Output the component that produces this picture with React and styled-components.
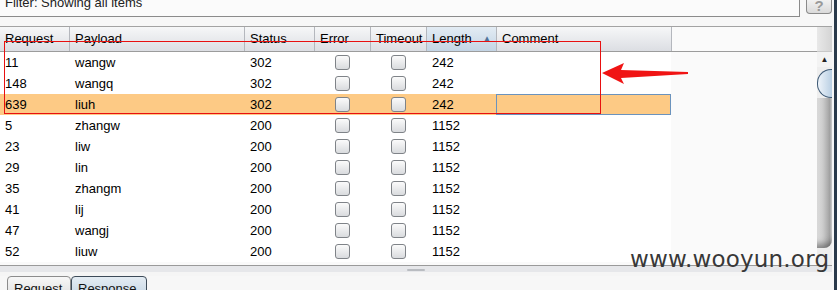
import styled, { createGlobalStyle } from "styled-components";

const Global = createGlobalStyle`
  html, body { margin: 0; padding: 0; background: #f7f7f7; }
  body { font-family: "Liberation Sans", Arial, sans-serif; }
`;

const Page = styled.div`
  position: relative;
  width: 837px;
  height: 290px;
  box-sizing: border-box;
  padding-right: 2px;
  border-right: 3px solid #2a3a4b;
  background: #f7f7f7;
  display: flex;
  flex-direction: column;
  overflow: hidden;
  font-size: 13px;
  color: #000;
`;

const TopRow = styled.div`
  height: 17px;
  display: flex;
  gap: 6px;
`;

const FilterBox = styled.div`
  width: 800px;
  height: 17px;
  box-sizing: border-box;
  border-right: 1px solid #8b8b8b;
  border-bottom: 1px solid #8b8b8b;
  background: #fbfbfb;
  display: flex;
  align-items: flex-end;
  padding: 0 0 6px 5px;
  overflow: hidden;
  line-height: 15px;
  color: #222;
`;

const HelpButton = styled.div`
  flex: 1;
  height: 14px;
  box-sizing: border-box;
  border: 1px solid #8a8a8a;
  border-top: none;
  border-radius: 0 0 4px 4px;
  background: linear-gradient(#f1f1f1, #dadada);
  display: flex;
  align-items: flex-end;
  justify-content: center;
  overflow: hidden;
  color: #9a9a9a;
  font-size: 15px;
  font-weight: bold;
  line-height: 15px;
`;

const TableArea = styled.div`
  margin-top: 9px;
  height: 240px;
  box-sizing: border-box;
  border-top: 1px solid #a3a3a3;
  border-bottom: 1px solid #9a9a9a;
  display: flex;
`;

const GridPane = styled.div`
  width: 817px;
  flex-shrink: 0;
  background: #fafafa;
  display: flex;
  flex-direction: column;
`;

const HeaderRow = styled.div`
  display: flex;
  height: 25px;
  box-sizing: border-box;
  border-bottom: 1px solid #9c9c9c;
`;

const HeaderCell = styled.div`
  width: ${(p) => p.$w}px;
  box-sizing: border-box;
  padding: 0 5px;
  border-left: ${(p) => (p.$first ? "none" : "1px solid #b4b7bd")};
  background: ${(p) =>
    p.$sorted
      ? "linear-gradient(#e3ecf4, #c3d4e4)"
      : "linear-gradient(#f6f7f8, #dcdee3)"};
  display: flex;
  align-items: center;
  justify-content: space-between;
  line-height: 24px;
`;

const SortArrow = styled.span`
  color: #4f7398;
  font-size: 8px;
  line-height: 8px;
`;

const HeaderEnd = styled.div`
  width: 1px;
  background: #b4b7bd;
`;

const Body = styled.div`
  display: flex;
  flex-direction: column;
`;

const Row = styled.div`
  display: flex;
  height: 21px;
  width: 671px;
  background: ${(p) => (p.$selected ? "#fdca85" : "#fff")};
`;

const Cell = styled.div`
  width: ${(p) => p.$w}px;
  box-sizing: border-box;
  padding-left: ${(p) => (p.$center ? 0 : p.$first ? 5 : 6)}px;
  display: flex;
  align-items: center;
  justify-content: ${(p) => (p.$center ? "center" : "flex-start")};
  border: ${(p) => (p.$focus ? "1px solid #6b93bd" : "none")};
  white-space: nowrap;
`;

const Check = styled.span`
  width: 13px;
  height: 13px;
  border: 1px solid #7f8388;
  border-radius: 3px;
  background: linear-gradient(#fbfbfb, #d9dbde);
`;

const ScrollBar = styled.div`
  width: 15px;
  flex-shrink: 0;
  display: flex;
  flex-direction: column;
  background: #eeeeee;
`;

const ScrollCorner = styled.div`
  height: 25px;
  flex-shrink: 0;
  box-sizing: border-box;
  border-bottom: 1px solid #c8c8c8;
  background: linear-gradient(90deg, #e8e8e8, #d4d4d4);
`;

const ScrollButton = styled.div`
  height: 15px;
  flex-shrink: 0;
  display: flex;
  align-items: center;
  justify-content: center;
  font-size: 8px;
  color: #222;
  background: #f3f3f3;
`;

const Thumb = styled.div`
  margin-top: 2px;
  height: 29px;
  flex-shrink: 0;
  box-sizing: border-box;
  border: 1px solid #3e5a76;
  border-right: none;
  border-radius: 14px 0 0 14px;
  background: linear-gradient(90deg, #eef4fa, #b9cfe3);
`;

const Track = styled.div`
  height: 150px;
  flex-shrink: 0;
  border-radius: 0 0 8px 0;
  background: linear-gradient(90deg, #e0e0e0 0%, #cbcbcb 40%, #a2a2a2 85%, #d4d4d4 100%);
  box-shadow: inset 0 -8px 6px -4px rgba(50, 50, 50, 0.5);
`;

const Splitter = styled.div`
  height: 10px;
  display: flex;
  justify-content: center;
  padding-top: 2px;
  box-sizing: border-box;
  background: linear-gradient(#e6e7ea, #e6e7ea 6px, #f5f5f5 6px);
`;

const Grip = styled.div`
  width: 18px;
  height: 2px;
  margin-top: 1px;
  background: #b9bcc1;
  border-radius: 1px;
`;

const Tabs = styled.div`
  display: flex;
  padding-left: 7px;
  height: 14px;
`;

const Tab = styled.div`
  width: ${(p) => p.$w}px;
  box-sizing: border-box;
  height: 20px;
  border: 1px solid ${(p) => (p.$active ? "#3d4b59" : "#8c8c8c")};
  border-radius: 4px 4px 0 0;
  background: ${(p) =>
    p.$active
      ? "linear-gradient(#e4ecf3, #c8d8e6)"
      : "linear-gradient(#f7f7f7, #e2e2e2)"};
  padding: 4px 0 0 6px;
  font-size: 13px;
  color: #111;
`;

const RedBox = styled.div`
  position: absolute;
  left: 4px;
  top: 41px;
  width: 597px;
  height: 73px;
  box-sizing: border-box;
  border: 1px solid #e81010;
`;

const Arrow = styled.svg`
  position: absolute;
  left: 600px;
  top: 60px;
`;

const Watermark = styled.div`
  position: absolute;
  left: 630px;
  top: 246px;
  font-family: "DejaVu Sans", sans-serif;
  font-size: 23px;
  color: #383838;
  letter-spacing: 0.2px;
`;

const columns = [
  { key: "req", label: "Request", w: 69 },
  { key: "payload", label: "Payload", w: 175 },
  { key: "status", label: "Status", w: 70 },
  { key: "error", label: "Error", w: 56 },
  { key: "timeout", label: "Timeout", w: 56 },
  { key: "length", label: "Length", w: 70, sorted: true },
  { key: "comment", label: "Comment", w: 175 },
];

const rows = [
  ["11", "wangw", "302", "242"],
  ["148", "wangq", "302", "242"],
  ["639", "liuh", "302", "242"],
  ["5", "zhangw", "200", "1152"],
  ["23", "liw", "200", "1152"],
  ["29", "lin", "200", "1152"],
  ["35", "zhangm", "200", "1152"],
  ["41", "lij", "200", "1152"],
  ["47", "wangj", "200", "1152"],
  ["52", "liuw", "200", "1152"],
];

const App = () => {
  return (
    <Page>
      <Global />
      <TopRow>
        <FilterBox>Filter: Showing all items</FilterBox>
        <HelpButton>?</HelpButton>
      </TopRow>

      <TableArea>
        <GridPane>
          <HeaderRow>
            {columns.map((c, i) => (
              <HeaderCell key={c.key} $w={c.w} $first={i === 0} $sorted={c.sorted}>
                {c.label}
                {c.sorted && <SortArrow>▲</SortArrow>}
              </HeaderCell>
            ))}
            <HeaderEnd />
          </HeaderRow>
          <Body>
            {rows.map((r, ri) => {
              const selected = ri === 2;
              return (
                <Row key={r[0]} $selected={selected}>
                  <Cell $w={69} $first>{r[0]}</Cell>
                  <Cell $w={175}>{r[1]}</Cell>
                  <Cell $w={70}>{r[2]}</Cell>
                  <Cell $w={56} $center><Check /></Cell>
                  <Cell $w={56} $center><Check /></Cell>
                  <Cell $w={70}>{r[3]}</Cell>
                  <Cell $w={175} $focus={selected}></Cell>
                </Row>
              );
            })}
          </Body>
        </GridPane>
        <ScrollBar>
          <ScrollCorner />
          <ScrollButton>▲</ScrollButton>
          <Thumb />
          <Track />
        </ScrollBar>
      </TableArea>

      <Splitter>
        <Grip />
      </Splitter>

      <Tabs>
        <Tab $w={64}>Request</Tab>
        <Tab $w={76} $active>Response</Tab>
      </Tabs>

      <RedBox />
      <Arrow width="90" height="30" viewBox="0 0 90 30">
        <polygon points="2,13 24,3 21,10 88,12 88,14 21,18 24,24" fill="#f01414" />
      </Arrow>
      <Watermark>www.wooyun.org</Watermark>
    </Page>
  );
};

export default App;
